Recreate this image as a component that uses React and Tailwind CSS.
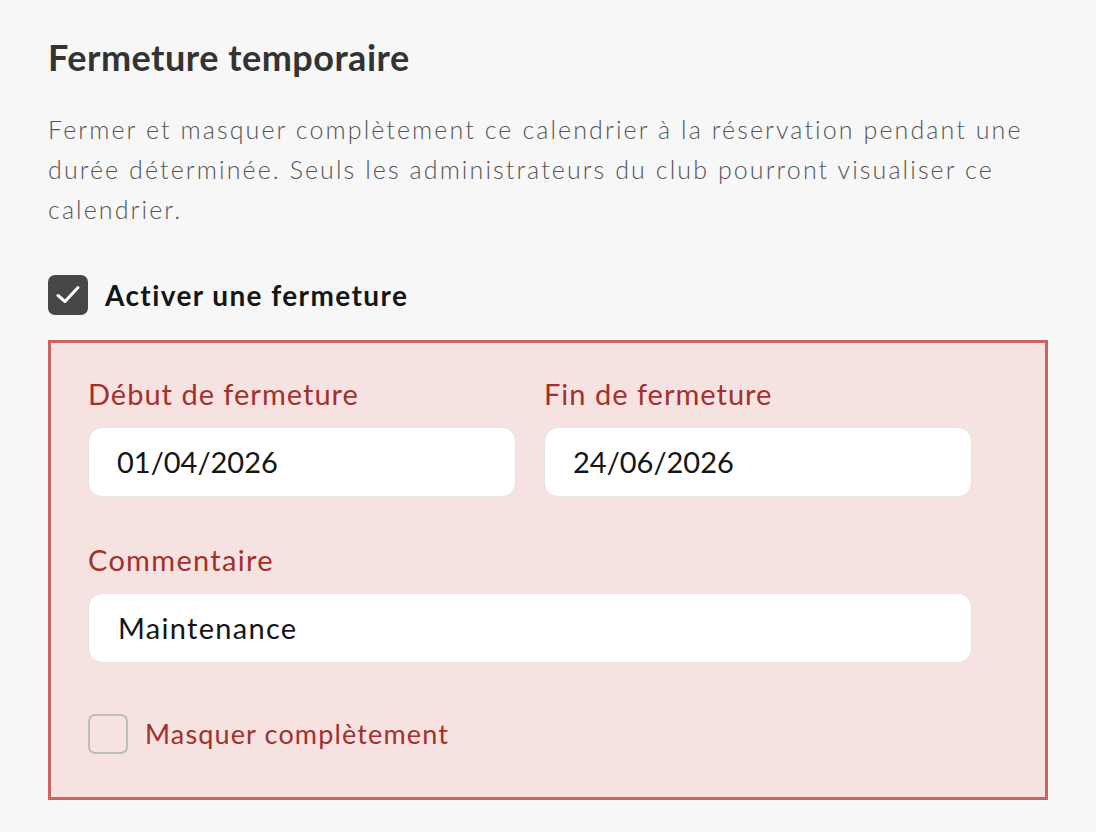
export default function App() {
  return (
    <div
      className="min-h-screen bg-[#f7f7f7] px-12 pt-[35px]"
      style={{ fontFamily: "Lato, 'Noto Sans', sans-serif" }}
    >
      <div className="w-[1000px]">
        <h2 className="text-[36px] font-bold leading-[44px] tracking-[0.5px] text-[#333333]">
          Fermeture temporaire
        </h2>

        <p className="mt-[30px] whitespace-nowrap text-[25px] font-light leading-[40px] tracking-[2.1px] text-[#555555]">
          Fermer et masquer complètement ce calendrier à la réservation pendant une
          <br />
          durée déterminée. Seuls les administrateurs du club pourront visualiser ce
          <br />
          calendrier.
        </p>

        {/* Enable closure */}
        <label className="mt-[45px] flex items-center gap-[17px]">
          <span className="flex h-10 w-10 items-center justify-center rounded-[7px] bg-[#474747]">
            <svg width="40" height="40" viewBox="0 0 40 40" fill="none">
              <path
                d="M10 20.5l7 6L30 12.5"
                stroke="#fff"
                strokeWidth="3"
                strokeLinecap="round"
                strokeLinejoin="round"
              />
            </svg>
          </span>
          <span className="text-[28px] font-bold tracking-[1.4px] text-[#151515]">
            Activer une fermeture
          </span>
        </label>

        {/* Closure panel */}
        <div className="mt-[24px] h-[460px] border-[3px] border-[#c96662] bg-[#f7e2e2] pl-[37px] pt-[33px]">
          <div className="w-[884px]">
            <div className="grid grid-cols-2 gap-7">
              <div>
                <div className="text-[29px] leading-[36px] tracking-[1px] text-[#a3302b]">
                  Début de fermeture
                </div>
                <div className="mt-[15px] flex h-[70px] items-center rounded-[14px] border-[1.5px] border-[#e4e4e4] bg-white px-[28px] text-[29px] text-[#151515]">
                  01/04/2026
                </div>
              </div>
              <div>
                <div className="text-[29px] leading-[36px] tracking-[1px] text-[#a3302b]">
                  Fin de fermeture
                </div>
                <div className="mt-[15px] flex h-[70px] items-center rounded-[14px] border-[1.5px] border-[#e4e4e4] bg-white px-[28px] text-[29px] text-[#151515]">
                  24/06/2026
                </div>
              </div>
            </div>

            <div className="mt-[45px] text-[29px] leading-[36px] tracking-[1.3px] text-[#a3302b]">
              Commentaire
            </div>
            <div className="mt-[15px] flex h-[70px] items-center rounded-[14px] border-[1.5px] border-[#e4e4e4] bg-white px-[29px] text-[29px] tracking-[1.3px] text-[#151515]">
              Maintenance
            </div>

            <label className="mt-[51px] flex items-center gap-[17px]">
              <span className="h-10 w-10 rounded-[7px] border-2 border-[#bdbdbd]" />
              <span className="text-[27px] tracking-[1.15px] text-[#a3302b]">
                Masquer complètement
              </span>
            </label>
          </div>
        </div>
      </div>
    </div>
  );
}
